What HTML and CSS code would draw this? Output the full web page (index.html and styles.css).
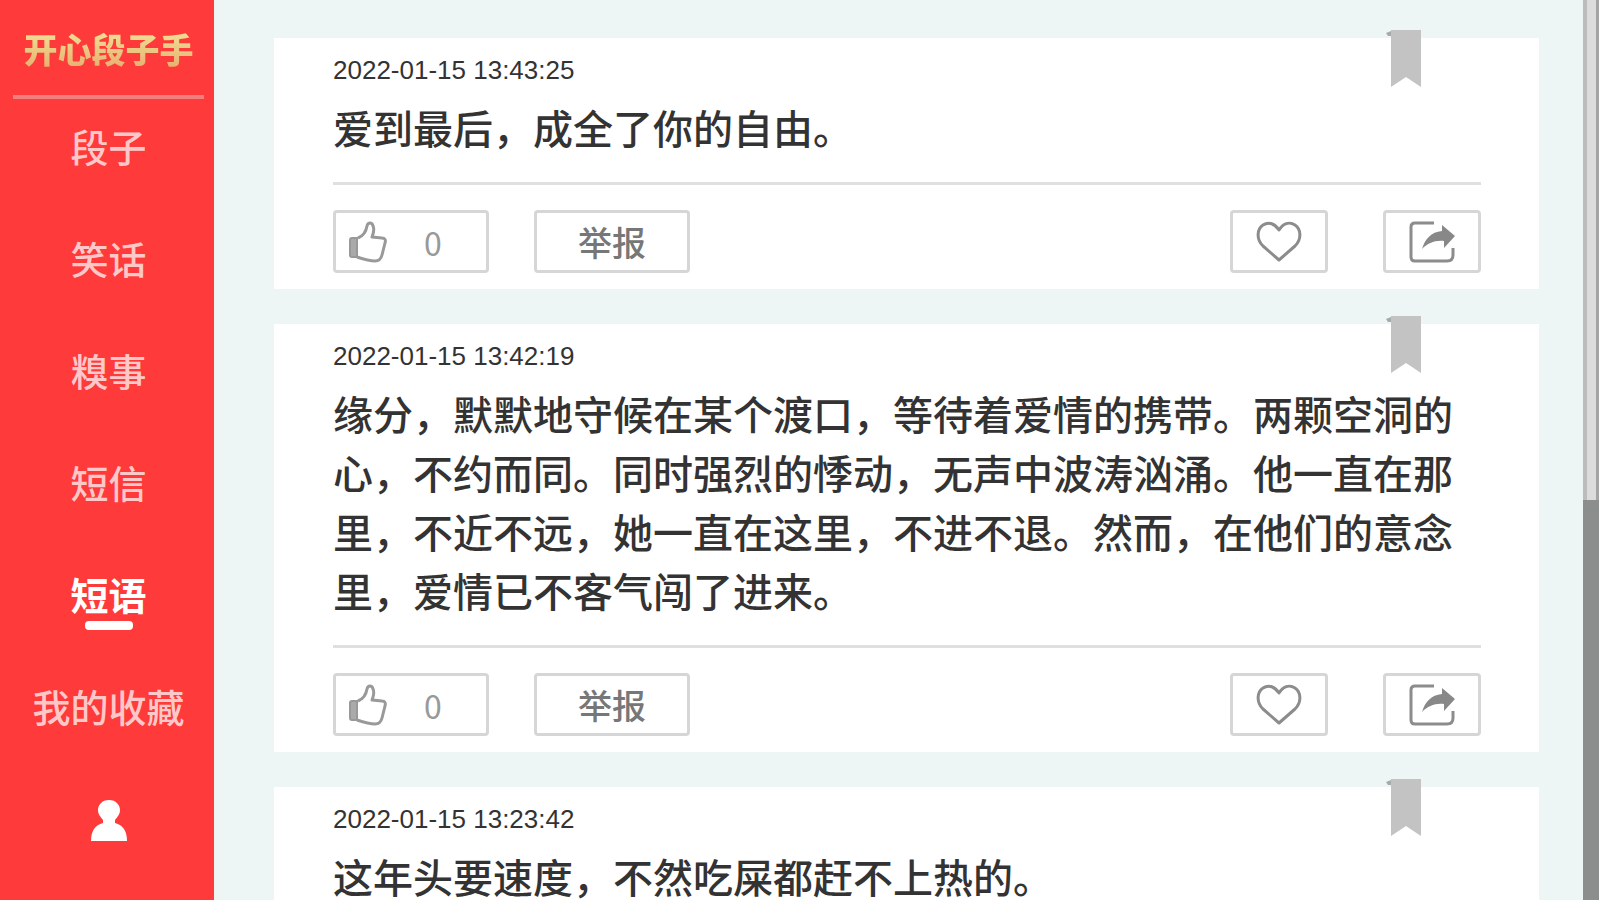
FILE: index.html
```html
<!DOCTYPE html>
<html lang="zh-CN">
<head>
<meta charset="UTF-8">
<meta name="viewport" content="width=device-width, initial-scale=1.0">
<title>开心段子手</title>
<link rel="stylesheet" href="styles.css">
</head>
<body>
	<!-- 公用图标 -->
	<svg class="icon-defs" width="0" height="0" aria-hidden="true">
		<symbol id="icon-good" viewBox="0 0 40 42">
			<path d="M10 17 C15 15 18 11 19 5 C20 1 24 1 25 5 C27 9 25 13 24 16 L34 17 C37 17 38 19 37 22 L34 34 C33 38 31 40 27 40 C21 40 15 38 9 36" fill="none" stroke="#999" stroke-width="3" stroke-linejoin="round"/>
			<path d="M2 19 Q2 17 4 17 H9 V36 H4 Q2 36 2 34 Z" fill="#aaa" stroke="#999" stroke-width="2"/>
		</symbol>
		<symbol id="icon-heart" viewBox="0 0 46 42">
			<path d="M23 39 L7 25 C0 18 1 8 7 4 C13 0 19 3 23 9 C27 3 33 0 39 4 C45 8 46 18 39 25 Z" fill="none" stroke="#8c8c8c" stroke-width="3" stroke-linejoin="round"/>
		</symbol>
		<symbol id="icon-share" viewBox="0 0 46 42">
			<path d="M25 2 H6 Q2 2 2 6 V36 Q2 40 6 40 H38 Q44 40 44 34 V27" fill="none" stroke="#8c8c8c" stroke-width="3"/>
			<path d="M33 4 L46 15 L35 27 V20 C26 19 19 22 13 28 C16 18 22 11 33 10 Z" fill="#888"/>
		</symbol>
		<symbol id="icon-flag" viewBox="0 0 36 58">
			<path d="M0 3 L5 1 H9 V6 H2 Z" fill="#a8aaaa"/>
			<path d="M5 0 H35 V57 L20 47 L5 57 Z" fill="#c3c3c3"/>
		</symbol>
	</svg>

	<nav class="sidebar">
		<h1 class="logo">开心段子手</h1>
		<a class="nav-item" href="#duanzi">段子</a>
		<a class="nav-item" href="#xiaohua">笑话</a>
		<a class="nav-item" href="#qiushi">糗事</a>
		<a class="nav-item" href="#duanxin">短信</a>
		<a class="nav-item active" href="#duanyu">短语</a>
		<a class="nav-item" href="#favorite">我的收藏</a>
		<a class="nav-item" href="#user" aria-label="个人中心">
			<svg width="38" height="42" viewBox="0 0 38 42"><path d="M19 0 C26 0 30 5 30 10 C30 15 27 17 25 20 V23 C33 25 37 31 37 41 H1 C1 31 5 25 13 23 V20 C11 17 8 15 8 10 C8 5 12 0 19 0 Z" fill="#fff"/></svg>
		</a>
	</nav>

	<main class="list">
		<article class="card">
			<svg class="flag"><use href="#icon-flag"/></svg>
			<time class="date">2022-01-15 13:43:25</time>
			<p class="content">爱到最后，成全了你的自由。</p>
			<div class="actions">
				<button class="btn btn-good" aria-label="点赞"><svg class="good"><use href="#icon-good"/></svg><span class="count">0</span></button>
				<button class="btn btn-report">举报</button>
				<button class="btn btn-icon btn-heart" aria-label="收藏"><svg><use href="#icon-heart"/></svg></button>
				<button class="btn btn-icon" aria-label="分享"><svg><use href="#icon-share"/></svg></button>
			</div>
		</article>

		<article class="card">
			<svg class="flag"><use href="#icon-flag"/></svg>
			<time class="date">2022-01-15 13:42:19</time>
			<p class="content">缘分，默默地守候在某个渡口，等待着爱情的携带。两颗空洞的心，不约而同。同时强烈的悸动，无声中波涛汹涌。他一直在那里，不近不远，她一直在这里，不进不退。然而，在他们的意念里，爱情已不客气闯了进来。</p>
			<div class="actions">
				<button class="btn btn-good" aria-label="点赞"><svg class="good"><use href="#icon-good"/></svg><span class="count">0</span></button>
				<button class="btn btn-report">举报</button>
				<button class="btn btn-icon btn-heart" aria-label="收藏"><svg><use href="#icon-heart"/></svg></button>
				<button class="btn btn-icon" aria-label="分享"><svg><use href="#icon-share"/></svg></button>
			</div>
		</article>

		<article class="card">
			<svg class="flag"><use href="#icon-flag"/></svg>
			<time class="date">2022-01-15 13:23:42</time>
			<p class="content">这年头要速度，不然吃屎都赶不上热的。</p>
			<div class="actions">
				<button class="btn btn-good" aria-label="点赞"><svg class="good"><use href="#icon-good"/></svg><span class="count">0</span></button>
				<button class="btn btn-report">举报</button>
				<button class="btn btn-icon btn-heart" aria-label="收藏"><svg><use href="#icon-heart"/></svg></button>
				<button class="btn btn-icon" aria-label="分享"><svg><use href="#icon-share"/></svg></button>
			</div>
		</article>
	</main>

	<!-- 滚动条 -->
	<div class="scrollbar"><div class="thumb"></div></div>
</body>
</html>
```

FILE: styles.css
```css
* {
	box-sizing: border-box;
}
body {
	display: flex;
	height: 100vh;
	margin: 0;
	overflow: hidden;
	font-family: "Liberation Sans", "Noto Sans CJK SC", sans-serif;
	background-color: #eef5f5;
}
.icon-defs {
	position: absolute;
}

/* 左侧导航 */
.sidebar {
	display: flex;
	flex-direction: column;
	flex: none;
	width: 214px;
	background-color: #ff3a3a;
}
.logo {
	margin: 0 10px 0 13px;
	padding-top: 26px;
	height: 99px;
	border-bottom: 4px solid #f08080;
	font-size: 34px;
	line-height: 50px;
	font-weight: 900;
	text-align: center;
	color: transparent;
	background: linear-gradient(#efdc90 35px, #e8b070 68px);
	-webkit-background-clip: text;
	background-clip: text;
}
.nav-item {
	display: flex;
	flex-direction: column;
	align-items: center;
	justify-content: center;
	flex: none;
	height: 112px;
	padding-left: 3px;
	font-size: 38px;
	line-height: 48px;
	font-weight: 500;
	color: #ffc8c8;
	text-decoration: none;
}
.logo + .nav-item {
	margin-top: -6px;
}
.nav-item.active {
	color: #fff;
	font-weight: bold;
}
.nav-item.active::after {
	content: "";
	width: 48px;
	height: 9px;
	margin-bottom: -9px;
	border-radius: 4px;
	background-color: #fff;
}

/* 段子列表 */
.list {
	display: flex;
	flex-direction: column;
	flex: 1;
	gap: 35px;
	padding: 38px 44px 38px 60px;
	overflow: hidden;
}
.card {
	position: relative;
	flex: none;
	padding: 17px 58px 16px 59px;
	background-color: #fff;
}
.flag {
	position: absolute;
	top: -8px;
	right: 117px;
	width: 36px;
	height: 58px;
}
.date {
	display: block;
	font-size: 26px;
	line-height: 30px;
	color: #333;
}
.content {
	margin: 16px 0 22px;
	font-size: 40px;
	line-height: 59px;
	font-weight: 500;
	color: #333;
}
.actions {
	display: flex;
	gap: 45px;
	padding-top: 25px;
	border-top: 3px solid #e0e0e0;
}
.btn {
	display: flex;
	align-items: center;
	justify-content: center;
	width: 156px;
	height: 63px;
	padding: 0;
	border: 3px solid #d6d6d6;
	border-radius: 4px;
	background-color: #fff;
	font-family: inherit;
	font-size: 34px;
	color: #777;
}
.btn-good {
	justify-content: flex-start;
	gap: 36px;
	padding-left: 12px;
}
.good {
	width: 40px;
	height: 42px;
}
.count {
	font-family: "Noto Sans CJK SC", sans-serif;
	font-size: 32px;
	color: #999;
}
.btn-report {
	font-weight: 500;
}
.btn-icon {
	width: 98px;
}
.btn-icon svg {
	width: 46px;
	height: 42px;
}
.btn-heart {
	margin-left: auto;
	margin-right: 10px;
}

/* 右侧滚动条 */
.scrollbar {
	flex: none;
	width: 16px;
	background-color: #8c8e8d;
}
.thumb {
	height: 500px;
	border-left: 4px solid #bcbcbc;
	border-right: 3px solid #a4a4a4;
	background-color: #dcdcdc;
}
```
